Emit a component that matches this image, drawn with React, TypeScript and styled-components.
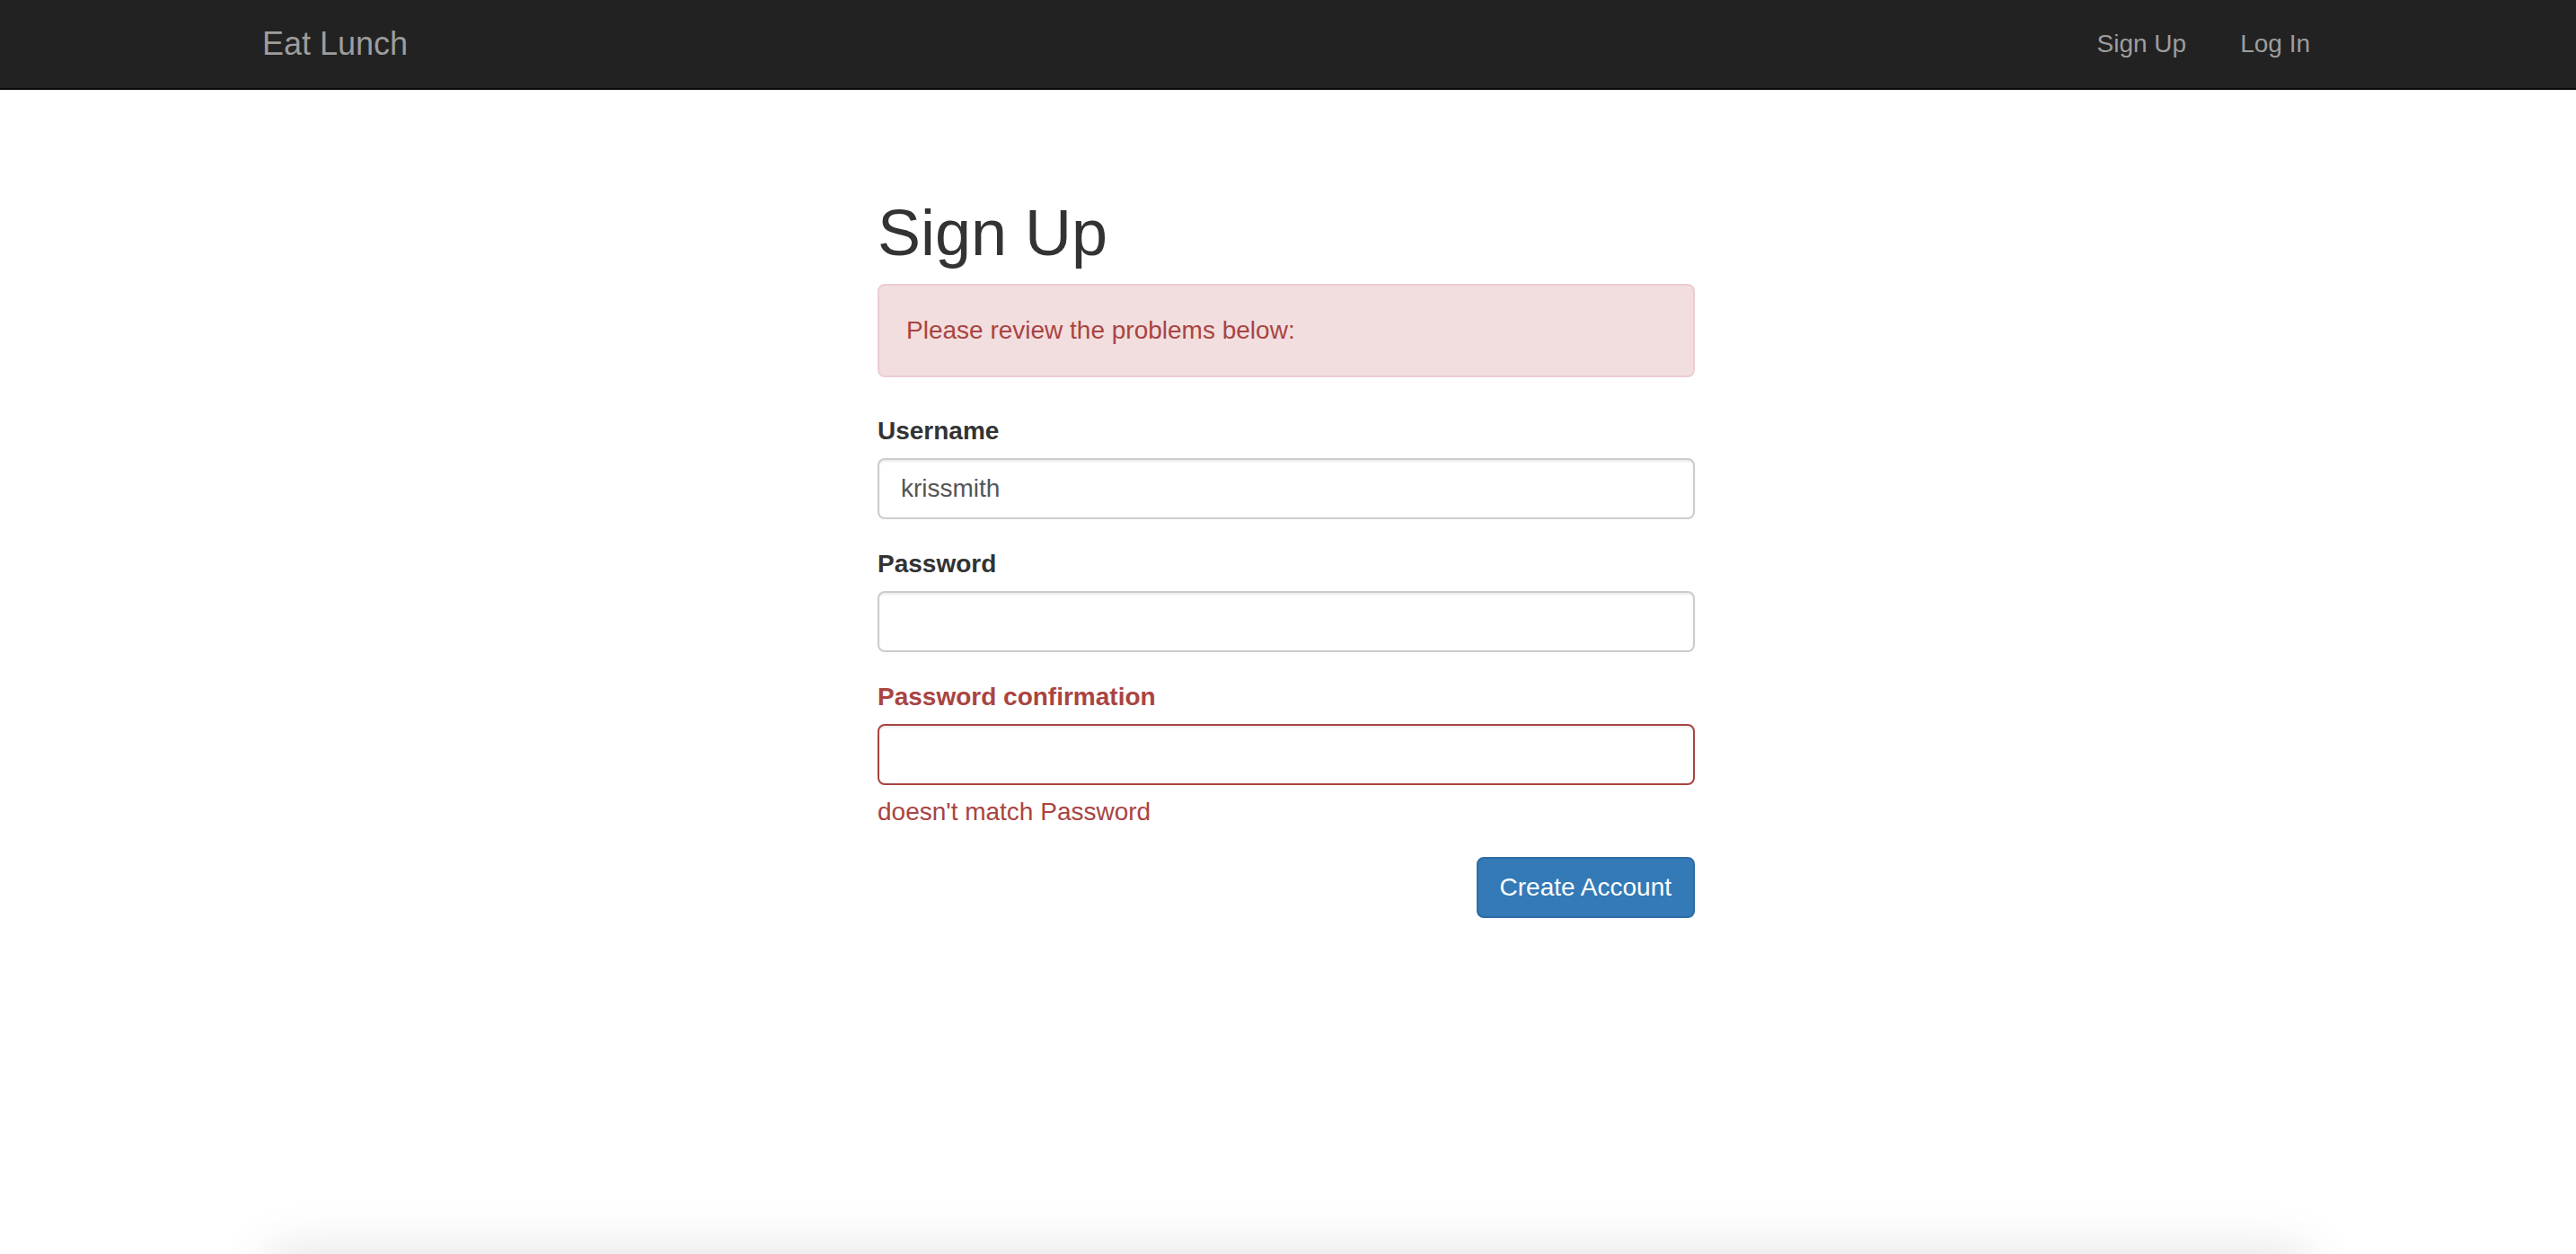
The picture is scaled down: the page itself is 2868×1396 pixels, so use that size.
import styled, {createGlobalStyle} from "styled-components";

const GlobalStyle = createGlobalStyle`
  * {
    box-sizing: border-box;
  }
  body {
    margin: 0;
    background: #fff;
    color: #333;
    font-family: "Liberation Sans", Arial, sans-serif;
    font-size: 28px;
    line-height: 40px;
  }
`;

const Page = styled.div`
  overflow: hidden;
`;

const Screen = styled.div`
  display: flex;
  flex-direction: column;
  min-height: 1396px;
`;

const Navbar = styled.nav`
  background-color: #222;
  border-bottom: 2px solid #080808;
  height: 100px;
  padding-right: 4px;
`;

const NavInner = styled.div`
  width: 2340px;
  margin: 0 auto;
  padding: 0 30px;
  display: flex;
  justify-content: space-between;
  align-items: center;
  height: 98px;
`;

const Brand = styled.a`
  font-size: 36px;
  line-height: 40px;
  color: #9d9d9d;
  text-decoration: none;
  padding: 29px 0;
`;

const NavLinks = styled.ul`
  display: flex;
  list-style: none;
  margin: 0 -30px 0 0;
  padding: 0;
`;

const NavLink = styled.a`
  display: block;
  padding: 29px 30px;
  color: #9d9d9d;
  text-decoration: none;
  font-size: 28px;
  line-height: 40px;
`;

const Main = styled.main`
  flex: 1;
  display: flex;
  justify-content: center;
  padding: 120px 4px 0 0;
`;

const FormColumn = styled.div`
  width: 910px;
`;

const Title = styled.h1`
  font-size: 72px;
  font-weight: 500;
  line-height: 79px;
  margin: 0 0 17px;
  color: #333;
`;

const Alert = styled.div`
  padding: 30px;
  margin-bottom: 40px;
  border: 2px solid #ebccd1;
  border-radius: 8px;
  background-color: #f2dede;
  color: #a94442;
`;

const FormGroup = styled.div`
  margin-bottom: 30px;
`;

const Label = styled.label<{$error?: boolean}>`
  display: block;
  font-weight: bold;
  margin-bottom: 10px;
  color: ${p => (p.$error ? "#a94442" : "#333")};
`;

const Input = styled.input<{$error?: boolean}>`
  display: block;
  width: 100%;
  height: 68px;
  padding: 12px 24px;
  font-family: inherit;
  font-size: 28px;
  line-height: 40px;
  color: #555;
  background: #fff;
  border: 2px solid ${p => (p.$error ? "#a94442" : "#ccc")};
  border-radius: 8px;
  box-shadow: inset 0 2px 2px rgba(0, 0, 0, 0.075);
  outline: none;
`;

const HelpBlock = styled.span`
  display: block;
  margin-top: 10px;
  margin-bottom: 20px;
  color: #a94442;
`;

const Actions = styled.div`
  display: flex;
  justify-content: flex-end;
`;

const Button = styled.button`
  font-family: inherit;
  font-size: 28px;
  line-height: 40px;
  padding: 12px 24px;
  color: #fff;
  background-color: #337ab7;
  border: 2px solid #2e6da4;
  border-radius: 8px;
  cursor: pointer;
`;

const Footer = styled.footer`
  width: 2270px;
  height: 120px;
  margin: 0 auto;
  background: #fff;
  box-shadow: 0 0 60px rgba(0, 0, 0, 0.13);
`;

function App() {
    return <>
        <GlobalStyle/>
        <Page>
            <Screen>
                <Navbar>
                    <NavInner>
                        <Brand href="#">Eat Lunch</Brand>
                        <NavLinks>
                            <li><NavLink href="#">Sign Up</NavLink></li>
                            <li><NavLink href="#">Log In</NavLink></li>
                        </NavLinks>
                    </NavInner>
                </Navbar>
                <Main>
                    <FormColumn>
                        <Title>Sign Up</Title>
                        <Alert>Please review the problems below:</Alert>
                        <FormGroup>
                            <Label>Username</Label>
                            <Input type="text" defaultValue="krissmith"/>
                        </FormGroup>
                        <FormGroup>
                            <Label>Password</Label>
                            <Input type="password"/>
                        </FormGroup>
                        <FormGroup>
                            <Label $error>Password confirmation</Label>
                            <Input type="password" $error/>
                            <HelpBlock>doesn't match Password</HelpBlock>
                        </FormGroup>
                        <Actions>
                            <Button>Create Account</Button>
                        </Actions>
                    </FormColumn>
                </Main>
            </Screen>
            <Footer/>
        </Page>
    </>;
}

export default App;
